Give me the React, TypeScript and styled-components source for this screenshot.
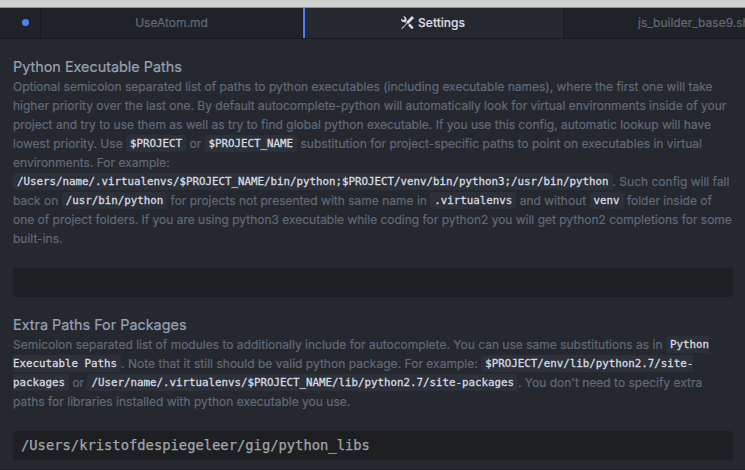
import React from 'react';
import styled, { createGlobalStyle } from 'styled-components';

const Global = createGlobalStyle`
  * { box-sizing: border-box; }
  body { margin: 0; overflow: hidden; background: #25282f; }
`;

const Pane = styled.main`
  width: 745px;
  height: 470px;
  overflow: hidden;
  display: flex;
  flex-direction: column;
  background: #25282f;
  color: #616a76;
  border-bottom: 1px solid #1c1e22;
  font: 12px/19px Inter, 'Liberation Sans', sans-serif;
`;

const TitleBar = styled.header`
  flex: none;
  height: 8px;
  background: #d0d2d0;
  border-bottom: 1px solid #929495;
`;

const TabBar = styled.nav`
  flex: none;
  display: grid;
  grid-template-columns: 41px 262px 261px 181px;
  height: 31px;
  border-bottom: 1px solid #181a1e;
`;

const Tab = styled.div<{ $active?: boolean; $overflow?: boolean }>`
  display: flex;
  align-items: center;
  justify-content: ${(p) => (p.$overflow ? 'flex-start' : 'center')};
  gap: 4px;
  padding: 0 ${(p) => (p.$active ? '2px' : '0')} 1px ${(p) => (p.$overflow ? '74px' : '0')};
  overflow: hidden;
  white-space: nowrap;
  background: ${(p) => (p.$active ? '#25282f' : '#1f2226')};
  color: ${(p) => (p.$active ? '#d7dae0' : '#616a76')};
  font-weight: ${(p) => (p.$active ? 500 : 400)};
  border-left: ${(p) => (p.$active ? '2px solid #4d82f0' : '0')};
  border-right: ${(p) => (p.$overflow ? '0' : '1px solid #181a1e')};
  -webkit-text-stroke: 0.2px currentColor;
`;

const ModifiedDot = styled.span`
  width: 7px;
  height: 7px;
  margin-left: 10px;
  border-radius: 50%;
  background: #4d82f0;
`;

const Setting = styled.section`
  margin: 18px 12px 0 13px;
`;

const Title = styled.h3`
  margin: 0;
  color: #99a2b2;
  font-size: 14.4px;
  font-weight: 400;
  line-height: 20px;
  -webkit-text-stroke: 0.2px currentColor;
`;

const Description = styled.div`
  margin-bottom: 20px;
  -webkit-text-stroke: 0.2px currentColor;
`;

const Line = styled.div<{ $track?: number }>`
  height: 19px;
  white-space: nowrap;
  letter-spacing: ${(p) => p.$track ?? 0}px;
`;

const Code = styled.code<{ $open?: 'left' | 'right' }>`
  display: inline-block;
  height: 17px;
  line-height: 17px;
  vertical-align: top;
  margin-top: 1px;
  padding: 0 ${(p) => (p.$open === 'right' ? 0 : 4)}px 0 ${(p) => (p.$open === 'left' ? 0 : 4)}px;
  border-radius: ${(p) =>
    p.$open === 'right' ? '3px 0 0 3px' : p.$open === 'left' ? '0 3px 3px 0' : '3px'};
  background: #2c3038;
  color: #d7dae0;
  font-family: 'DejaVu Sans Mono', monospace;
  font-size: 10.8px;
  letter-spacing: 0;
  -webkit-text-stroke: 0.3px #d7dae0;
`;

const Field = styled.div`
  width: 720px;
  height: 29px;
  padding: 0 8px;
  border-radius: 3px;
  background: #1d1f23;
  color: #a3a5a9;
  font: 13.8px/29px 'DejaVu Sans Mono', monospace;
  white-space: nowrap;
  -webkit-text-stroke: 0.25px #a3a5a9;
`;

const ToolsIcon = () => (
  <svg width="13" height="13" viewBox="0 0 16 16" fill="currentColor" aria-hidden="true">
    <path d="M4.48 7.27c.26.26 1.28 1.33 1.28 1.33l.56-.58-.88-.91 1.69-1.8s-.76-.74-.43-.45c.32-1.19.03-2.51-.87-3.44C4.93.5 3.66.2 2.52.51l1.93 2-.51 1.96-1.89.52-1.93-1.99C-.19 4.17.1 5.48 1 6.4c.94.98 2.29 1.26 3.48.87zm6.44 1.94l-2.33 2.3 3.84 3.98c.31.33.73.49 1.14.49.41 0 .82-.16 1.14-.49.63-.65.63-1.7 0-2.35l-3.79-3.93zM16 2.53L13.55 0 6.33 7.46l.88.91-4.31 4.46-.99.53-1.39 2.27.35.37 2.2-1.44.51-1.02L7.9 9.08l.88.91L16 2.53z" />
  </svg>
);

export default function App() {
  return (
    <Pane>
      <Global />
      <TitleBar />
      <TabBar>
        <Tab><ModifiedDot /></Tab>
        <Tab>UseAtom.md</Tab>
        <Tab $active><ToolsIcon />Settings</Tab>
        <Tab $overflow>js_builder_base9.sh</Tab>
      </TabBar>
      <Setting>
        <Title>Python Executable Paths</Title>
        <Description>
          <Line $track={-0.005}>Optional semicolon separated list of paths to python executables (including executable names), where the first one will take</Line>
          <Line $track={-0.005}>higher priority over the last one. By default autocomplete-python will automatically look for virtual environments inside of your</Line>
          <Line>project and try to use them as well as try to find global python executable. If you use this config, automatic lookup will have</Line>
          <Line $track={0.015}>lowest priority. Use <Code>$PROJECT</Code> or <Code>$PROJECT_NAME</Code> substitution for project-specific paths to point on executables in virtual</Line>
          <Line>environments. For example:</Line>
          <Line><Code>/Users/name/.virtualenvs/$PROJECT_NAME/bin/python;$PROJECT/venv/bin/python3;/usr/bin/python</Code>. Such config will fall</Line>
          <Line>back on <Code>/usr/bin/python</Code> for projects not presented with same name in <Code>.virtualenvs</Code> and without <Code>venv</Code> folder inside of</Line>
          <Line $track={-0.01}>one of project folders. If you are using python3 executable while coding for python2 you will get python2 completions for some</Line>
          <Line>built-ins.</Line>
        </Description>
        <Field />
      </Setting>
      <Setting>
        <Title>Extra Paths For Packages</Title>
        <Description>
          <Line $track={0.005}>Semicolon separated list of modules to additionally include for autocomplete. You can use same substitutions as in <Code $open="right">Python</Code></Line>
          <Line $track={0.025}><Code $open="left">Executable Paths</Code>. Note that it still should be valid python package. For example: <Code $open="right">$PROJECT/env/lib/python2.7/site-</Code></Line>
          <Line><Code $open="left">packages</Code> or <Code>/User/name/.virtualenvs/$PROJECT_NAME/lib/python2.7/site-packages</Code>. You don't need to specify extra</Line>
          <Line $track={0.01}>paths for libraries installed with python executable you use.</Line>
        </Description>
        <Field>/Users/kristofdespiegeleer/gig/python_libs</Field>
      </Setting>
    </Pane>
  );
}
